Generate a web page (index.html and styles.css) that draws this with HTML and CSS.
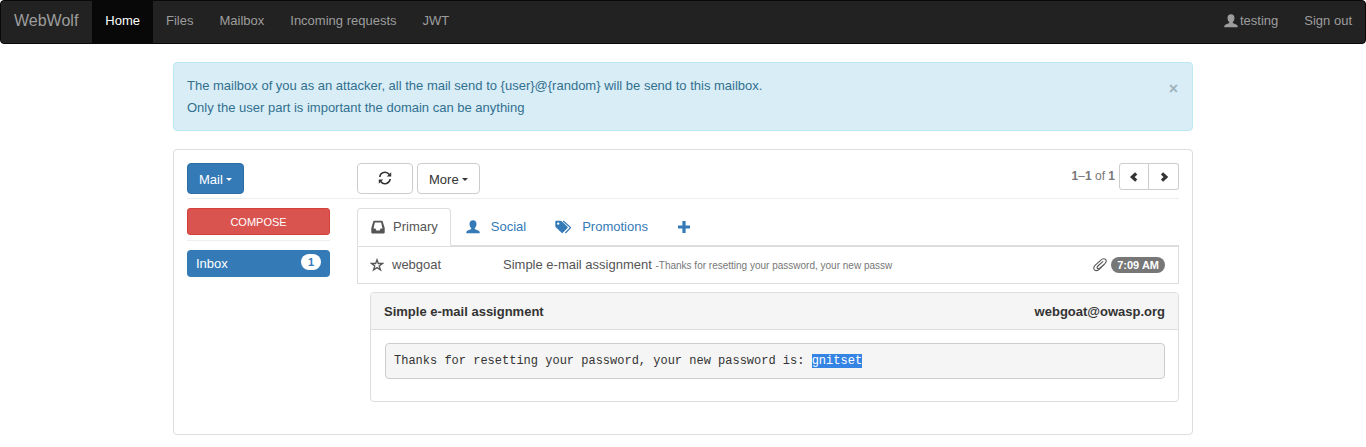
FILE: index.html
```
<!DOCTYPE html>
<html lang="en">
<head>
<meta charset="utf-8">
<title>WebWolf</title>
<link rel="stylesheet" href="styles.css">
</head>
<body>
<svg class="sprite" aria-hidden="true">
  <symbol id="user" viewBox="0 0 14 14"><path d="M7 .3c2.200 0 3.500 1.500 3.500 3.600 0 1.600-.7 3.100-1.600 4-.3.500-.2 1.100.4 1.400l3.400 1.500c.7.400 1 .8 1 1.500v1H.3v-1c0-.7.3-1.100 1-1.500l3.400-1.500c.6-.3.7-.9.4-1.400C4.200 7 3.500 5.500 3.500 3.900 3.500 1.800 4.800.3 7 .3z"/></symbol>
  <symbol id="refresh" viewBox="0 0 14 14"><path d="M1.800 6A5.200 5.200 0 0 1 11.200 3.500M12.200 8A5.200 5.200 0 0 1 2.800 10.500" fill="none" stroke="currentColor" stroke-width="1.600"/><path d="M13.200 1.200v4.400H8.800zM.8 12.800V8.400h4.400z"/></symbol>
  <symbol id="inbox" viewBox="0 0 14 14"><path fill-rule="evenodd" d="M3.200.8h7.600c.5 0 .8.300.9.700L13.700 8v4.600c0 .5-.3.800-.8.800H1.100c-.5 0-.8-.3-.8-.8V8l2-6.500c.1-.4.400-.7.900-.7zM3.900 2.500 2.500 8.400h1.900l1 2.100h3.200l1-2.100h1.900L10.100 2.500z"/></symbol>
  <symbol id="tags" viewBox="0 0 16 14"><path fill-rule="evenodd" d="M.3 1.500C.3 1 .6.700 1.100.7h4.400c.5 0 .9.200 1.200.5l5.800 5.600c.4.400.4.900 0 1.300L7.900 12.800c-.4.400-.9.400-1.300 0L.8 7.200C.5 6.900.3 6.500.3 6zM3.200 2.400a1.200 1.200 0 1 0 0 2.400 1.200 1.200 0 0 0 0-2.400z"/><path d="M8.200 1l6.900 6.100c.3.300.3.700 0 1L10.400 13" fill="none" stroke="currentColor" stroke-width="1.300"/></symbol>
  <symbol id="plus" viewBox="0 0 14 14"><path d="M5.400 1h3.200v4.400H13v3.200H8.600V13H5.400V8.600H1V5.400h4.400z"/></symbol>
  <symbol id="star" viewBox="0 0 14 14"><path d="M7 1.800l1.300 3.700h4.200L9.200 8l1.300 4L7 9.600 3.500 12l1.300-4L1.500 5.500h4.200z" fill="none" stroke="currentColor" stroke-width="1.300"/></symbol>
  <symbol id="clip" viewBox="0 0 14 14"><path d="M12 5.600 7 10.600c-1.600 1.600-4 2.600-5.500 1.300-1.300-1.200-.7-3.300.8-4.800l5.300-4.800C9 1 11.200.3 12.500 1.400s.7 2.900-.6 4.200L7.100 9.900c-.9.800-2.100 1.100-2.700.5s-.3-1.600.5-2.400l4.900-4.300" fill="none" stroke="currentColor" stroke-width="1.100" stroke-linecap="round"/></symbol>
  <symbol id="left" viewBox="0 0 14 14"><path d="M9.200 3.300 5.300 7l3.900 3.700" fill="none" stroke="currentColor" stroke-width="3.200"/></symbol>
  <symbol id="right" viewBox="0 0 14 14"><path d="M5 3.300 8.900 7 5 10.700" fill="none" stroke="currentColor" stroke-width="3.200"/></symbol>
</svg>

<nav class="navbar">
  <a class="brand" href="#">WebWolf</a>
  <a class="nav-link active" href="#">Home</a>
  <a class="nav-link" href="#">Files</a>
  <a class="nav-link" href="#">Mailbox</a>
  <a class="nav-link" href="#">Incoming requests</a>
  <a class="nav-link" href="#">JWT</a>
  <a class="nav-link account" href="#"><svg class="icon"><use href="#user"/></svg>testing</a>
  <a class="nav-link" href="#">Sign out</a>
</nav>

<main class="container">
  <div class="alert" role="alert">
    <p>The mailbox of you as an attacker, all the mail send to {user}@{random} will be send to this mailbox.<br>Only the user part is important the domain can be anything</p>
    <button class="close" type="button" aria-label="Close">×</button>
  </div>

  <section class="panel">
    <div class="toolbar">
      <div class="side"><button class="btn primary" type="button">Mail <span class="caret"></span></button></div>
      <div class="actions">
        <button class="btn refresh" type="button" aria-label="Refresh"><svg class="icon"><use href="#refresh"/></svg></button>
        <button class="btn" type="button">More <span class="caret"></span></button>
        <span class="count"><b>1</b>–<b>1</b> of <b>1</b></span>
        <div class="pager">
          <button type="button" aria-label="Previous"><svg class="icon"><use href="#left"/></svg></button>
          <button type="button" aria-label="Next"><svg class="icon"><use href="#right"/></svg></button>
        </div>
      </div>
    </div>

    <div class="columns">
      <aside class="side">
        <button class="compose" type="button">COMPOSE</button>
        <hr>
        <a class="folder" href="#">Inbox <span class="unread">1</span></a>
      </aside>
      <div class="mail">
        <div class="tabs">
          <a class="tab current" href="#"><svg class="icon"><use href="#inbox"/></svg>Primary</a>
          <a class="tab" href="#"><svg class="icon"><use href="#user"/></svg>Social</a>
          <a class="tab" href="#"><svg class="icon wide"><use href="#tags"/></svg>Promotions</a>
          <a class="tab" href="#" aria-label="Add tab"><svg class="icon"><use href="#plus"/></svg></a>
        </div>
        <a class="row" href="#">
          <svg class="icon"><use href="#star"/></svg>
          <span class="sender">webgoat</span>
          <span class="subject">Simple e-mail assignment <small>-Thanks for resetting your password, your new passw</small></span>
          <svg class="icon"><use href="#clip"/></svg>
          <span class="time">7:09 AM</span>
        </a>
        <article class="message">
          <header><span>Simple e-mail assignment</span><span>webgoat@owasp.org</span></header>
          <pre>Thanks for resetting your password, your new password is: <mark>gnitset</mark></pre>
        </article>
      </div>
    </div>
  </section>
</main>
</body>
</html>
```
FILE: styles.css
```
* { box-sizing: border-box; }
body {
  margin: 0;
  background: #fff;
  color: #333;
  font: 13px/18px "Liberation Sans", Arial, sans-serif;
}
a { color: #337ab7; text-decoration: none; }
button { font: inherit; cursor: pointer; }
.sprite { position: absolute; width: 0; height: 0; }
.icon { width: 14px; height: 14px; flex: none; fill: currentColor; }
.icon.wide { width: 16px; }

.navbar {
  display: flex;
  background: #222;
  border: 1px solid #090909;
  border-radius: 4px;
}
.brand, .nav-link {
  display: flex;
  align-items: center;
  padding: 11px 13px 13px;
  color: #9d9d9d;
}
.brand { padding-right: 14px; font-size: 16px; }
.nav-link.active { background: #080808; color: #fff; }
.account { margin-left: auto; gap: 2px; }

.container { max-width: 1020px; margin: 18px auto 0; }
.alert {
  display: flex;
  justify-content: space-between;
  align-items: flex-start;
  padding: 12px 13px 11px;
  background: #d9edf7;
  border: 1px solid #bce8f1;
  border-radius: 4px;
  color: #31708f;
  line-height: 22px;
}
.alert p { margin: 0; }
.close {
  padding: 0 1px;
  border: 0;
  background: none;
  color: #9fb3bc;
  font-size: 16px;
  font-weight: bold;
  line-height: 28px;
}

.panel {
  margin-top: 18px;
  padding: 13px 13px 32px;
  border: 1px solid #ddd;
  border-radius: 4px;
}
.toolbar, .columns { display: flex; gap: 27px; }
.toolbar { padding-bottom: 4px; border-bottom: 1px solid #eee; }
.columns { padding-top: 9px; }
.side { width: 143px; flex: none; }
.actions { flex: 1; display: flex; align-items: flex-start; gap: 4px; }
.btn {
  display: inline-flex;
  align-items: center;
  gap: 3px;
  height: 31px;
  padding: 2px 11px 0;
  background: #fff;
  border: 1px solid #ccc;
  border-radius: 4px;
  color: #333;
}
.btn.primary { background: #337ab7; border-color: #2e6da4; color: #fff; }
.btn.refresh { padding: 0 20px 2px; }
.caret { border: 3px solid transparent; border-top-color: currentColor; border-bottom: 0; }
.count { margin-left: auto; padding-top: 4px; color: #777; font-size: 12px; }
.pager { display: flex; }
.pager button {
  display: flex;
  align-items: center;
  justify-content: center;
  width: 30px;
  height: 27px;
  padding: 0;
  background: #fff;
  border: 1px solid #ccc;
  border-radius: 3px 0 0 3px;
  color: #333;
}
.pager button + button { border-left: 0; border-radius: 0 3px 3px 0; }

.compose {
  display: block;
  width: 100%;
  height: 27px;
  padding: 1px 0 0;
  background: #d9534f;
  border: 1px solid #d43f3a;
  border-radius: 3px;
  color: #fff;
  font-size: 11px;
}
.side hr { margin: 5px 0 9px; border: 0; border-top: 1px solid #eee; }
.folder {
  display: flex;
  justify-content: space-between;
  align-items: center;
  height: 27px;
  padding: 0 9px;
  background: #337ab7;
  border-radius: 4px;
  color: #fff;
}
.unread, .time { border-radius: 9px; font-size: 11px; font-weight: bold; line-height: 16px; }
.unread { margin-bottom: 3px; padding: 0 7px; background: #fff; color: #337ab7; }

.mail { flex: 1; min-width: 0; }
.tabs { display: flex; border-bottom: 1px solid #ddd; }
.tab {
  display: flex;
  align-items: center;
  gap: 8px;
  height: 38px;
  margin: 0 2px -1px 0;
  padding: 0 12px;
  border: 1px solid transparent;
  border-radius: 4px 4px 0 0;
}
.tab + .tab { gap: 11px; padding: 0 13px 0 12px; }
.tab.current { padding-left: 13px; background: #fff; border-color: #ddd; border-bottom-color: #fff; color: #555; }
.row {
  display: flex;
  align-items: center;
  height: 38px;
  padding: 0 13px 0 12px;
  border: 1px solid #ddd;
  color: #555;
}
.sender { width: 111px; margin-left: 8px; }
.subject { flex: 1; }
.subject small { color: #777; font-size: 10px; line-height: 1; }
.time { margin-left: 4px; padding: 0 6px; background: #777; color: #fff; }

.message { margin: 8px 0 0 13px; border: 1px solid #ddd; border-radius: 4px; }
.message header {
  display: flex;
  justify-content: space-between;
  padding: 10px 13px 8px;
  background: #f5f5f5;
  border-bottom: 1px solid #ddd;
  border-radius: 3px 3px 0 0;
  font-weight: bold;
}
.message pre {
  margin: 13px 13px 22px 14px;
  padding: 8px;
  background: #f5f5f5;
  border: 1px solid #ccc;
  border-radius: 4px;
  font: 12px/18px "Liberation Mono", monospace;
  white-space: pre-wrap;
}
mark { background: #3584e4; color: #fff; }
```
